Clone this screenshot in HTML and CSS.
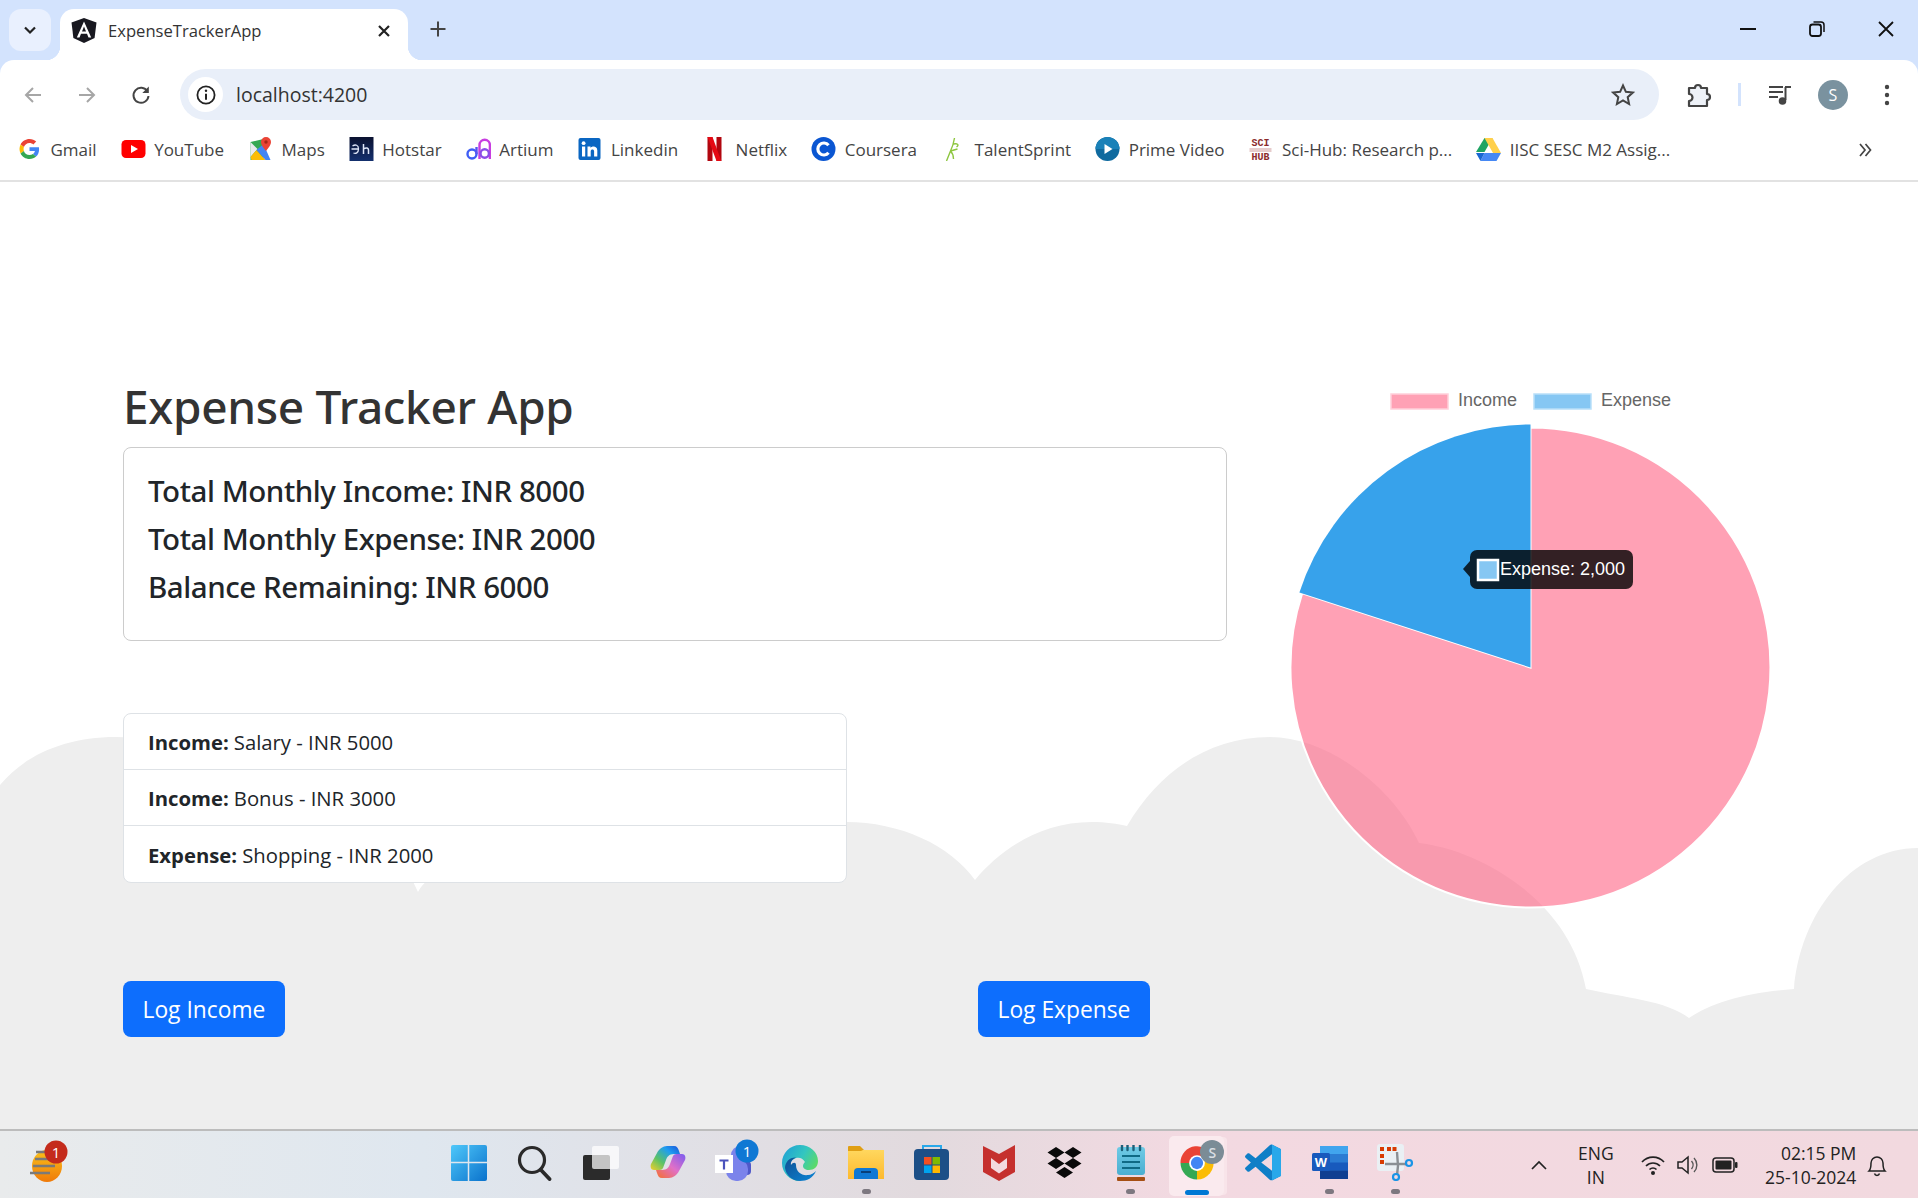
FILE: index.html
```html
<!DOCTYPE html>
<html lang="en">
<head>
  <meta charset="UTF-8">
  <title>ExpenseTrackerApp</title>
  <link rel="stylesheet" href="styles.css">
</head>
<body>
  <header class="browser">
    <div class="tabstrip">
      <div class="tab-search">
        <svg width="16" height="16" viewBox="0 0 16 16"><path d="M3 5.500l5 5 5-5" fill="none" stroke="#222" stroke-width="2.200"/></svg>
      </div>
      <div class="tab">
        <svg class="favicon" width="26" height="25" viewBox="0 0 26 25">
          <path d="M13 0L25.500 4.400 23.600 20 13 25 2.400 20 .5 4.400z" fill="#181820"/>
          <path d="M13 3.500L5.800 19.500h2.700l1.500-3.700h6l1.500 3.700h2.700zM11 13.500l2-4.900 2 4.900z" fill="#fff"/>
        </svg>
        <span class="tab-title">ExpenseTrackerApp</span>
        <svg class="tab-close" width="14" height="14" viewBox="0 0 14 14"><path d="M2 2l10 10M12 2L2 12" stroke="#222" stroke-width="2.200"/></svg>
      </div>
      <svg class="new-tab" width="18" height="18" viewBox="0 0 18 18"><path d="M9 1.500v15M1.500 9h15" stroke="#444" stroke-width="2"/></svg>
      <div class="win-controls">
        <svg width="16" height="4" viewBox="0 0 16 4"><path d="M0 2h16" stroke="#111" stroke-width="2"/></svg>
        <svg width="16" height="16" viewBox="0 0 16 16"><rect x="1" y="3.500" width="11" height="11.500" rx="2.500" fill="none" stroke="#111" stroke-width="1.800"/><path d="M4.500 1h7.500a3 3 0 0 1 3 3v7" fill="none" stroke="#111" stroke-width="1.500"/></svg>
        <svg width="16" height="16" viewBox="0 0 16 16"><path d="M1 1l14 14M15 1L1 15" stroke="#111" stroke-width="1.800"/></svg>
      </div>
    </div>

    <div class="toolbar">
      <div class="nav-buttons">
        <svg width="20" height="20" viewBox="0 0 20 20"><path d="M18 10H3M10 3l-7 7 7 7" fill="none" stroke="#a6a6a6" stroke-width="2"/></svg>
        <svg width="20" height="20" viewBox="0 0 20 20"><path d="M2 10h15M10 3l7 7-7 7" fill="none" stroke="#a6a6a6" stroke-width="2"/></svg>
        <svg width="20" height="20" viewBox="0 0 20 20"><path d="M16.500 6.500A7.500 7.500 0 1 0 17.500 11" fill="none" stroke="#444" stroke-width="2"/><path d="M17.800 1.500v6.500h-6.500z" fill="#444"/></svg>
      </div>
      <div class="omnibox">
        <div class="site-info">
          <svg width="20" height="20" viewBox="0 0 20 20"><circle cx="10" cy="10" r="8.600" fill="none" stroke="#222" stroke-width="1.800"/><path d="M10 8.800v6" stroke="#222" stroke-width="2"/><circle cx="10" cy="5.800" r="1.200" fill="#222"/></svg>
        </div>
        <span class="url">localhost:4200</span>
        <svg class="star" width="24" height="24" viewBox="0 0 24 24"><path d="M12 2.500l2.900 6.300 6.900.8-5.100 4.600 1.400 6.800-6.100-3.500-6.100 3.500 1.400-6.800L2.200 9.600l6.900-.8z" fill="none" stroke="#444" stroke-width="2"/></svg>
      </div>
      <div class="toolbar-icons">
        <svg class="puzzle" width="26" height="26" viewBox="0 0 26 26"><path d="M3 6h6a3 3 0 0 1 6 0h6v6a3 3 0 0 1 0 6v6H3v-5a3 3 0 0 0 0-7z" fill="#eef2f8" stroke="#444" stroke-width="2.200" stroke-linejoin="round"/></svg>
        <span class="tool-sep"></span>
        <svg class="media" width="24" height="22" viewBox="0 0 24 22"><path d="M1 3h14M1 8h14M1 13h9" stroke="#444" stroke-width="2"/><path d="M17 3h6" stroke="#444" stroke-width="2"/><path d="M17.500 3v13" stroke="#444" stroke-width="2"/><circle cx="14.500" cy="17" r="3.800" fill="#444"/></svg>
        <span class="avatar">S</span>
        <svg class="menu-dots" width="6" height="22" viewBox="0 0 6 22"><circle cx="3" cy="3" r="2.200" fill="#444"/><circle cx="3" cy="11" r="2.200" fill="#444"/><circle cx="3" cy="19" r="2.200" fill="#444"/></svg>
      </div>
    </div>

    <nav class="bookmarks">
      <a class="bm">
        <svg width="25" height="20" viewBox="0 0 48 48"><path fill="#EA4335" d="M24 9.500c3.540 0 6.710 1.220 9.210 3.600l6.850-6.850C35.900 2.380 30.470 0 24 0 14.620 0 6.510 5.380 2.560 13.220l7.980 6.190C12.430 13.720 17.740 9.500 24 9.500z"/><path fill="#4285F4" d="M46.980 24.550c0-1.570-.15-3.090-.38-4.550H24v9.020h12.940c-.58 2.960-2.260 5.480-4.780 7.180l7.730 6c4.510-4.180 7.090-10.360 7.090-17.650z"/><path fill="#FBBC05" d="M10.530 28.590c-.48-1.450-.76-2.990-.76-4.590s.27-3.140.76-4.590l-7.980-6.190C.92 16.460 0 20.120 0 24c0 3.880.92 7.540 2.560 10.780l7.970-6.190z"/><path fill="#34A853" d="M24 48c6.480 0 11.930-2.130 15.890-5.810l-7.730-6c-2.150 1.450-4.920 2.300-8.160 2.300-6.260 0-11.570-4.220-13.470-9.910l-7.980 6.190C6.510 42.620 14.620 48 24 48z"/></svg>
        Gmail
      </a>
      <a class="bm">
        <svg width="25" height="18" viewBox="0 0 24 18"><rect width="24" height="18" rx="4.500" fill="#f00"/><path d="M9.500 5l7 4-7 4z" fill="#fff"/></svg>
        YouTube
      </a>
      <a class="bm">
        <svg width="25" height="24" viewBox="0 0 22 24"><path d="M1 5l13-3v20l-13 1z" fill="#34a853"/><path d="M1 5l7 7-7 8z" fill="#e8eaed"/><path d="M1 20l6-7 9 10H2z" fill="#fbbc05"/><path d="M7 13l7-6 7 16h-5z" fill="#4285f4"/><path d="M16.500 0a5 5 0 0 1 5 5c0 3.500-5 9-5 9s-5-5.500-5-9a5 5 0 0 1 5-5z" fill="#ea4335"/><circle cx="16.500" cy="5" r="1.700" fill="#a52714"/></svg>
        Maps
      </a>
      <a class="bm">
        <svg width="25" height="24" viewBox="0 0 24 24"><defs><linearGradient id="hs" x1="0" y1="0" x2="0" y2="1"><stop offset="0" stop-color="#0b1230"/><stop offset="1" stop-color="#14306e"/></linearGradient></defs><rect width="24" height="24" fill="url(#hs)"/><path d="M3 9c3-2 6-1 6 3s-3 5-5 4M2 12h7" fill="none" stroke="#dfe6f8" stroke-width="1.300"/><path d="M14 7v10M14 12c3-2 5-1 5 1v4" fill="none" stroke="#dfe6f8" stroke-width="1.500"/></svg>
        Hotstar
      </a>
      <a class="bm">
        <svg width="25" height="24" viewBox="0 0 25 24"><circle cx="6" cy="17" r="4.500" fill="none" stroke="#3f5ef5" stroke-width="2.400"/><path d="M10.500 17V10" stroke="#5a55f0" stroke-width="2.400"/><path d="M13.500 22V8a5.200 5.200 0 0 1 10.400 0v14" fill="none" stroke="#c83de0" stroke-width="2.400"/><circle cx="18.700" cy="16.500" r="4.200" fill="none" stroke="#8d4de8" stroke-width="2.400"/></svg>
        Artium
      </a>
      <a class="bm">
        <svg width="25" height="22" viewBox="0 0 22 22"><rect width="22" height="22" rx="2" fill="#0a66c2"/><rect x="3.500" y="8.500" width="3.200" height="10" fill="#fff"/><circle cx="5.100" cy="5.200" r="1.900" fill="#fff"/><path d="M9 8.500h3v1.500c1-2 6.800-2.600 6.800 2.500v6h-3.200v-5.200c0-2.500-3.400-2.300-3.400 0v5.200H9z" fill="#fff"/></svg>
        Linkedin
      </a>
      <a class="bm">
        <svg width="25" height="24" viewBox="0 0 16 24"><path d="M1 0h5v24l-5 .5z" fill="#b1060f"/><path d="M10 0h5v24.500l-5-.5z" fill="#b1060f"/><path d="M1 0h5l9 24.500-5-.5z" fill="#e50914"/></svg>
        Netflix
      </a>
      <a class="bm">
        <svg width="25" height="24" viewBox="0 0 25 24"><circle cx="12.500" cy="12" r="12" fill="#0a56d2"/><path d="M17.500 8.200a6 6 0 1 0 0 7.600" fill="none" stroke="#fff" stroke-width="3.200"/></svg>
        Coursera
      </a>
      <a class="bm">
        <svg width="25" height="24" viewBox="0 0 16 24"><path d="M9 1c-1 6-2 9-4 13L1 24M5 14l7-2M8 7c4-1 6 1 3 3M5 14c2 2 3 5 3 8" fill="none" stroke="#8dc63f" stroke-width="1.400"/></svg>
        TalentSprint
      </a>
      <a class="bm">
        <svg width="25" height="24" viewBox="0 0 24 24"><circle cx="12" cy="12" r="12" fill="#0f6a9f"/><path d="M0 12a12 12 0 0 1 24 0z" fill="#1a81b8"/><path d="M9 7l8 5-8 5z" fill="#fff"/></svg>
        Prime Video
      </a>
      <a class="bm">
        <svg class="scihub" width="25" height="24" viewBox="0 0 24 24"><text class="scihub-mark" x="12" y="9" text-anchor="middle">SCI</text><path d="M1 12h22M1 14h22" stroke="#c99" stroke-width="1"/><text class="scihub-mark" x="12" y="23" text-anchor="middle">HUB</text></svg>
        Sci-Hub: Research p...
      </a>
      <a class="bm">
        <svg width="25" height="23" viewBox="0 0 25 23"><path d="M8.500 0h8l-8 14H0z" fill="#1fa463"/><path d="M8.500 0h8l8.500 15h-8z" fill="#ffd04b"/><path d="M4.500 23h16l4.500-8H8.500z" fill="#4688f4"/><path d="M0 15h8.500l-4 8z" fill="#1967d2"/></svg>
        IISC SESC M2 Assig...
      </a>
      <svg class="bm-more" width="14" height="14" viewBox="0 0 14 14"><path d="M2 1l5 6-5 6M7.500 1l5 6-5 6" fill="none" stroke="#444" stroke-width="1.700"/></svg>
    </nav>
  </header>

  <main class="page">
    <svg class="clouds" viewBox="0 182 1918 947" preserveAspectRatio="none">
      <path d="M0 785C25 755 65 737 116 737C230 737 375 790 418 892C445 840 650 822 846 822C900 822 950 845 975 880C1000 850 1040 822 1092 822C1105 822 1118 824 1127 826C1160 770 1210 737 1270 737C1330 737 1395 790 1419 843C1480 850 1570 900 1586 989C1625 998 1665 1000 1689 1018C1712 1002 1750 992 1794 989C1800 915 1850 848 1918 848V1129H0Z" fill="#eeeeee"/>
    </svg>

    <section class="left-col">
      <h1>Expense Tracker App</h1>
      <div class="summary">
        <p>Total Monthly Income: INR 8000</p>
        <p>Total Monthly Expense: INR 2000</p>
        <p>Balance Remaining: INR 6000</p>
      </div>
      <ul class="entries">
        <li><strong>Income:</strong> Salary - INR 5000</li>
        <li><strong>Income:</strong> Bonus - INR 3000</li>
        <li><strong>Expense:</strong> Shopping - INR 2000</li>
      </ul>
      <div class="actions">
        <button>Log Income</button>
        <button>Log Expense</button>
      </div>
    </section>

    <svg class="chart" width="540" height="560" viewBox="1264 370 540 560">
      <rect x="1391" y="394" width="57" height="15" fill="#ffa1b5" stroke="#ffd0da" stroke-width="1.500"/>
      <text class="legend" x="1458" y="406">Income</text>
      <rect x="1534" y="394" width="57" height="15" fill="#86c7f3" stroke="#b9dff9" stroke-width="1.500"/>
      <text class="legend" x="1601" y="406">Expense</text>

      <path d="M1530.500 667.500V427.500A240 240 0 1 1 1302.200 593.300Z" fill="rgba(255,99,132,0.6)" stroke="#fff" stroke-width="2"/>
      <path d="M1530.500 667.500L1299.400 592.400A243 243 0 0 1 1530.500 424.500Z" fill="#37a2eb"/>

      <rect x="1470" y="550" width="163" height="39" rx="7" fill="rgba(0,0,0,0.8)"/>
      <path d="M1470 561l-7 8 7 8z" fill="rgba(0,0,0,0.8)"/>
      <rect x="1478" y="560" width="20" height="20" fill="#86c7f3" stroke="#fff" stroke-width="2.500"/>
      <text class="tip" x="1500" y="575">Expense: 2,000</text>
    </svg>
  </main>

  <footer class="taskbar">
    <div class="task-left">
      <svg width="44" height="44" viewBox="0 0 44 44">
        <defs><linearGradient id="wx" x1="0" y1="0" x2="0" y2="1"><stop offset="0" stop-color="#fbc21a"/><stop offset="1" stop-color="#ef7a0a"/></linearGradient></defs>
        <ellipse cx="20" cy="26" rx="15" ry="16" fill="url(#wx)"/>
        <path d="M8 19h16M6 26h22M3 33h20M9 12h10" stroke="#7a7a7a" stroke-width="2.500"/>
        <circle cx="29" cy="12" r="11.500" fill="#c42b1c"/>
        <text class="badge-num" x="29" y="17.500" text-anchor="middle">1</text>
      </svg>
    </div>

    <div class="task-apps">
      <div class="app">
        <svg width="36" height="36" viewBox="0 0 36 36"><defs><linearGradient id="win" x1="0" y1="0" x2="1" y2="1"><stop offset="0" stop-color="#4fc8fa"/><stop offset="1" stop-color="#0a72cc"/></linearGradient></defs><rect width="36" height="36" rx="2" fill="url(#win)"/><path d="M17.500 0v36M0 17.500h36" stroke="#dfe6ee" stroke-width="1.500"/></svg>
      </div>
      <div class="app">
        <svg width="36" height="36" viewBox="0 0 36 36"><circle cx="15" cy="15" r="12.500" fill="none" stroke="#2a2a2a" stroke-width="3.200"/><path d="M24 25l8.500 9" stroke="#2a2a2a" stroke-width="3.800" stroke-linecap="round"/></svg>
      </div>
      <div class="app">
        <svg width="36" height="34" viewBox="0 0 36 34"><rect x="0" y="9" width="27" height="25" rx="2" fill="#2b2b2b"/><rect x="9" y="0" width="27" height="23" rx="2" fill="rgba(255,255,255,0.72)"/></svg>
      </div>
      <div class="app">
        <svg width="36" height="33" viewBox="0 0 36 33"><defs><linearGradient id="cop" x1="1" y1="0" x2="0" y2="1"><stop offset="0" stop-color="#1b4fd8"/><stop offset=".3" stop-color="#1f9df0"/><stop offset=".65" stop-color="#5bc267"/><stop offset="1" stop-color="#f3cf2a"/></linearGradient><linearGradient id="cop2" x1="1" y1="0" x2="0" y2="1"><stop offset="0" stop-color="#7a5cf0"/><stop offset=".5" stop-color="#e070c8"/><stop offset="1" stop-color="#f5702b"/></linearGradient></defs><path d="M19 32H12C9 32 8 30 7 27L6 24H12C17 24 19 21 20 18L23 10C24 8 26 8 28 8H32C35 8 36 11 35 14L29 25C27 29 23 32 19 32Z" fill="url(#cop2)"/><path d="M17 0H24C27 0 28 2 29 5L30 8H24C19 8 17 11 16 14L13 22C12 24 10 24 8 24H4C1 24 0 21 1 18L7 7C9 3 13 0 17 0Z" fill="url(#cop)"/></svg>
      </div>
      <div class="app">
        <svg class="teams" width="44" height="42" viewBox="0 0 44 42"><circle cx="25" cy="16" r="9" fill="#7b83eb"/><rect x="24" y="22" width="12" height="14" rx="4" fill="#5059c9"/><rect x="11" y="20" width="22" height="22" rx="10" fill="#7b83eb"/><rect x="0" y="16" width="18" height="18" fill="#fff"/><path d="M4.500 21.500h9M9 21.500v9" stroke="#4b53bc" stroke-width="2.200"/><circle cx="32" cy="12" r="11.500" fill="#0f78d4"/><text class="badge-num" x="32" y="17.500" text-anchor="middle">1</text></svg>
      </div>
      <div class="app">
        <svg width="36" height="36" viewBox="0 0 36 36"><defs><linearGradient id="edge" x1="0" y1="0" x2="1" y2=".6"><stop offset="0" stop-color="#1c9cd8"/><stop offset=".55" stop-color="#33c6c0"/><stop offset="1" stop-color="#62dc5c"/></linearGradient><linearGradient id="edge2" x1="0" y1="0" x2="1" y2="1"><stop offset="0" stop-color="#0f4f93"/><stop offset="1" stop-color="#0c86d6"/></linearGradient></defs><path d="M18 0C28 0 36 7 36 16C36 22 32 25 27 25C23 25 21 23 21 21C21 19 22 18 23 17C21 13 17 12 14 13C8 15 6 21 8 26C10 31 14 34 18 36C8 36 0 28 0 18C0 8 8 0 18 0Z" fill="url(#edge)"/><path d="M14 20C14 27 20 31 26 30C29 30 32 28 34 26C31 33 25 36 18 36C10 36 4 30 3 23C3 17 8 12 14 12.500C10 14 8.500 17 9 20C11 17 14 17 14 20Z" fill="url(#edge2)"/></svg>
      </div>
      <div class="app has-dot">
        <svg width="36" height="33" viewBox="0 0 36 33"><defs><linearGradient id="fold" x1="0" y1="0" x2="0" y2="1"><stop offset="0" stop-color="#ffd75e"/><stop offset="1" stop-color="#fdb92e"/></linearGradient></defs><path d="M0 1a1 1 0 0 1 1-1h11l4 4h20v4H0z" fill="#e09f14"/><path d="M0 5h13l2-1h21v29H0z" fill="url(#fold)"/><path d="M6 33v-7a4 4 0 0 1 4-4h16a4 4 0 0 1 4 4v7z" fill="#0f78d4"/><path d="M13 26h10" stroke="#083f7a" stroke-width="2"/></svg>
      </div>
      <div class="app">
        <svg width="36" height="35" viewBox="0 0 36 35"><path d="M9 6V1h18v5" fill="none" stroke="#28a8ea" stroke-width="2"/><rect y="4" width="35" height="31" rx="4" fill="#1c4f87"/><rect x="10" y="12" width="7.500" height="7.500" fill="#f25022"/><rect x="18.500" y="12" width="7.500" height="7.500" fill="#7fba00"/><rect x="10" y="20.500" width="7.500" height="7.500" fill="#00a4ef"/><rect x="18.500" y="20.500" width="7.500" height="7.500" fill="#ffb900"/></svg>
      </div>
      <div class="app">
        <svg width="32" height="36" viewBox="0 0 32 36"><path d="M0 1l16 8 16-9v27l-16 9-16-9z" fill="#c5302e"/><path d="M8 13l8 6 8-6v10l-8 5.500L8 23z" fill="#f3d9df"/></svg>
      </div>
      <div class="app">
        <svg width="35" height="31" viewBox="0 0 35 31"><path d="M9 0l8.500 5.500L9 11 .5 5.500zM26 0l8.500 5.500L26 11l-8.500-5.500zM9 11l8.500 5.500L9 22 .5 16.500zM26 11l8.500 5.500L26 22l-8.500-5.500zM17.500 20l8.500 5.500L17.500 31 9 25.500z" fill="#0a0a0a"/></svg>
      </div>
      <div class="app has-dot">
        <svg width="28" height="36" viewBox="0 0 28 36"><defs><linearGradient id="note" x1="0" y1="0" x2="0" y2="1"><stop offset="0" stop-color="#6fcbe6"/><stop offset="1" stop-color="#4aaed0"/></linearGradient></defs><rect y="2" width="28" height="28" rx="3" fill="url(#note)"/><rect y="32" width="28" height="4" rx="1" fill="#a64f14"/><path d="M5 11h18M5 17h18M5 23h18" stroke="#0f6a85" stroke-width="2"/><path d="M5 0v5M10.500 0v5M16.500 0v5M23 0v5" stroke="#1d5f78" stroke-width="2.400" stroke-linecap="round"/></svg>
      </div>
      <div class="app is-active has-bar">
        <svg width="36" height="36" viewBox="0 0 48 48"><path d="M24 24L2 24A22 22 0 0 1 45.500 19Z" fill="#ea4335"/><path d="M24 24L45.500 19A22 22 0 0 1 24 46Z" fill="#fbbc05"/><path d="M24 24L24 46A22 22 0 0 1 2 24Z" fill="#34a853"/><circle cx="24" cy="24" r="10.500" fill="#fff"/><circle cx="24" cy="24" r="8.200" fill="#4285f4"/></svg>
        <span class="profile-badge">S</span>
      </div>
      <div class="app">
        <svg width="36" height="37" viewBox="0 0 100 100"><path fill-rule="evenodd" fill="#0f7fc7" d="M96.500 10.800L75.900.9c-2.400-1.100-5.200-.6-7.100 1.200L29.400 38.100 12.200 25.100c-1.600-1.200-3.800-1.100-5.300.2L1.400 30.400c-1.800 1.600-1.800 4.400 0 6.100L16.300 50 1.400 63.600c-1.800 1.700-1.800 4.500 0 6.100l5.500 5c1.500 1.300 3.700 1.400 5.300.2l17.200-13 39.400 35.900c1.900 1.900 4.700 2.300 7.100 1.200l20.600-9.900c2.200-1 3.500-3.100 3.500-5.500V16.300c0-2.400-1.400-4.500-3.500-5.500ZM75 72.700L45.100 50 75 27.300Z"/><path fill="#28a8ea" d="M75 .6l.9.3 20.600 9.900c2.100 1 3.500 3.100 3.500 5.500v67.400c0 2.400-1.300 4.500-3.500 5.500l-20.600 9.900-.9.300Z"/></svg>
      </div>
      <div class="app has-dot">
        <svg width="36" height="33" viewBox="0 0 36 33"><rect x="8" y="0" width="28" height="33" rx="2" fill="#2b7cd3"/><rect x="8" y="0" width="28" height="8" fill="#41a5ee"/><rect x="8" y="16.500" width="28" height="8" fill="#185abd"/><rect x="8" y="24.500" width="28" height="8.500" fill="#103f91"/><rect y="7" width="18" height="18" rx="1.500" fill="#185abd"/><text class="word-mark" x="9" y="21" text-anchor="middle">W</text></svg>
      </div>
      <div class="app has-dot">
        <svg width="37" height="37" viewBox="0 0 37 37"><rect width="27" height="27" rx="3" fill="#eaf0f4"/><path d="M3 3h4v4H3zM10 3h4v4h-4zM15.500 3h4v4h-4zM3 10h4v4H3zM3 16h4v4H3z" fill="#d83b01"/><path d="M20 8l1 14-1 9M8 20h21" fill="none" stroke="#8a8f94" stroke-width="2.400"/><circle cx="32" cy="19" r="3" fill="none" stroke="#1a94e6" stroke-width="2.200"/><circle cx="19" cy="33" r="3" fill="none" stroke="#1a94e6" stroke-width="2.200"/></svg>
      </div>
    </div>

    <div class="tray">
      <svg class="tray-chevron" width="16" height="10" viewBox="0 0 16 10"><path d="M1 9l7-7 7 7" fill="none" stroke="#222" stroke-width="1.700"/></svg>
      <div class="lang">ENG<br>IN</div>
      <svg class="tray-icon wifi" width="24" height="22" viewBox="0 0 24 22"><path d="M1 8c6-6.500 16-6.500 22 0M5 12c4-4 10-4 14 0M8.500 15.500c2-2 5-2 7 0" fill="none" stroke="#222" stroke-width="1.700"/><circle cx="12" cy="19" r="2" fill="#222"/></svg>
      <svg class="tray-icon" width="24" height="22" viewBox="0 0 24 22"><path d="M1 8h4l6-5v16l-6-5H1z" fill="none" stroke="#222" stroke-width="1.500"/><path d="M14.500 7a6 6 0 0 1 0 8M17 4a10 10 0 0 1 0 14" fill="none" stroke="#555" stroke-width="1.400"/></svg>
      <svg class="tray-icon battery" width="26" height="16" viewBox="0 0 26 16"><rect x="1" y="1" width="21" height="14" rx="3" fill="none" stroke="#222" stroke-width="1.500"/><rect x="3.500" y="3.500" width="16" height="9" rx="1" fill="#222"/><rect x="23" y="5" width="2.500" height="6" rx="1" fill="#222"/></svg>
      <div class="clock">02:15 PM<br>25-10-2024</div>
      <svg class="bell" width="22" height="24" viewBox="0 0 22 24"><path d="M3 18c2-2 2-4 2-8a6 6 0 0 1 12 0c0 4 0 6 2 8zM8.500 20.500a2.600 2.600 0 0 0 5 0" fill="none" stroke="#222" stroke-width="1.500"/></svg>
    </div>
  </footer>
</body>
</html>
```

FILE: styles.css
```css
* {
  box-sizing: border-box;
}
html, body {
  margin: 0;
  padding: 0;
}
body {
  width: 1918px;
  height: 1198px;
  overflow: hidden;
  background: #fff;
  font-family: "Open Sans", sans-serif;
  display: flex;
  flex-direction: column;
}

/* browser frame */
.browser {
  height: 182px;
  flex: none;
  background: #d3e3fd;
}
.tabstrip {
  height: 60px;
  display: flex;
  align-items: flex-start;
  padding: 9px 0 0 9px;
}
.tab-search {
  width: 42px;
  height: 42px;
  border-radius: 12px;
  background: #e9f0fe;
  display: flex;
  align-items: center;
  justify-content: center;
}
.tab {
  position: relative;
  width: 348px;
  height: 51px;
  margin-left: 9px;
  padding: 0 17px 8px 11px;
  background: #fff;
  border-radius: 14px 14px 0 0;
  display: flex;
  align-items: center;
}
.tab::before,
.tab::after {
  content: "";
  position: absolute;
  bottom: 0;
  width: 14px;
  height: 14px;
}
.tab::before {
  left: -14px;
  background: radial-gradient(circle at 0 0, transparent 14px, #fff 14.5px);
}
.tab::after {
  right: -14px;
  background: radial-gradient(circle at 100% 0, transparent 14px, #fff 14.5px);
}
.tab-title {
  margin-left: 11px;
  font-size: 16.6px;
  color: #333;
}
.tab-close {
  margin-left: auto;
}
.new-tab {
  margin: 11px 0 0 21px;
}
.win-controls {
  margin: 12px 0 0 auto;
  padding-right: 24px;
  display: flex;
  align-items: center;
  gap: 53px;
  height: 16px;
}

.toolbar {
  height: 60px;
  padding-top: 9px;
  background: #fff;
  border-radius: 14px 14px 0 0;
  display: flex;
  align-items: center;
}
.nav-buttons {
  width: 180px;
  padding-left: 23px;
  display: flex;
  gap: 34px;
}
.omnibox {
  width: 1479px;
  height: 51px;
  border-radius: 26px;
  background: #e9eff9;
  display: flex;
  align-items: center;
  padding: 0 24px 0 8px;
}
.site-info {
  width: 35px;
  height: 35px;
  border-radius: 50%;
  background: #fff;
  display: flex;
  align-items: center;
  justify-content: center;
}
.url {
  margin-left: 13px;
  font-size: 19.5px;
  color: #333;
}
.star {
  margin-left: auto;
}
.toolbar-icons {
  flex: 1;
  display: flex;
  align-items: center;
}
.puzzle {
  margin-left: 27px;
}
.tool-sep {
  width: 3px;
  height: 23px;
  margin-left: 26px;
  background: #d3e3fd;
}
.media {
  margin-left: 27px;
}
.avatar {
  width: 30px;
  height: 30px;
  margin-left: 26px;
  border-radius: 50%;
  background: #7a929f;
  color: #fff;
  font-size: 16px;
  display: flex;
  align-items: center;
  justify-content: center;
}
.menu-dots {
  margin-left: 36px;
}

.bookmarks {
  height: 62px;
  padding: 0 0 2px 17px;
  background: #fff;
  border-bottom: 2px solid #e2e2e2;
  display: flex;
  align-items: center;
}
.bm {
  display: flex;
  align-items: center;
  gap: 8.5px;
  margin-right: 24px;
  font-size: 17px;
  color: #444;
  white-space: nowrap;
}
.bm-more {
  position: absolute;
  left: 1858px;
  top: 143px;
}
.scihub {
  overflow: visible;
}
.scihub-mark {
  font-family: "Liberation Mono", monospace;
  font-size: 10px;
  font-weight: bold;
  fill: #8b2c2c;
}

/* page */
.page {
  position: relative;
  flex: 1;
  display: flex;
  align-items: flex-start;
  padding-left: 123px;
}
.clouds {
  position: absolute;
  left: 0;
  top: 0;
  width: 100%;
  height: 100%;
}
.left-col {
  position: relative;
  width: 1104px;
  flex: none;
  padding-top: 197px;
}
h1 {
  margin: 0 0 13px;
  font-family: "Noto Sans", sans-serif;
  font-size: 46px;
  line-height: 55px;
  font-weight: 500;
  letter-spacing: -0.33px;
  color: #333;
}
.summary {
  height: 194px;
  padding: 19px 24px;
  background: #fff;
  border: 1px solid #ccc;
  border-radius: 8px;
}
.summary p {
  margin: 0;
  font-family: "Noto Sans", sans-serif;
  font-size: 29.5px;
  line-height: 48px;
  font-weight: 500;
  letter-spacing: -0.45px;
  color: #212529;
}
.entries {
  width: 724px;
  height: 170px;
  margin: 72px 0 0;
  padding: 0;
  list-style: none;
  background: #fff;
  border: 1px solid #dee2e6;
  border-radius: 8px;
}
.entries li {
  height: 56px;
  padding: 1px 24px 0;
  display: flex;
  align-items: center;
  gap: 0.25em;
  border-bottom: 1px solid #dee2e6;
  font-size: 20.3px;
  color: #212529;
}
.entries li:last-child {
  border-bottom: 0;
}
.actions {
  display: grid;
  grid-template-columns: 855px auto;
  justify-content: start;
  justify-items: start;
  margin-top: 98px;
}
button {
  height: 56px;
  padding: 0 19.5px;
  border: 0;
  border-radius: 8px;
  background: #0d6efd;
  color: #fff;
  font-family: inherit;
  font-size: 22.8px;
}
.chart {
  position: relative;
  flex: none;
  margin: 188px 0 0 37px;
  overflow: visible;
}
.legend {
  font-family: "Liberation Sans", Arial, sans-serif;
  font-size: 18px;
  fill: #666;
}
.tip {
  font-family: "Liberation Sans", Arial, sans-serif;
  font-size: 18px;
  fill: #fff;
}

/* windows taskbar */
.taskbar {
  height: 69px;
  flex: none;
  border-top: 2px solid #bcbcbc;
  background: linear-gradient(90deg, #e9ebec 0, #dfe7ef 22%, #e2dade 48%, #f3d9e1 62%, #f2d9df 100%);
  display: flex;
  align-items: center;
}
.task-left {
  width: 436px;
  padding: 0 0 6px 27px;
  display: flex;
}
.task-apps {
  display: flex;
  align-items: center;
}
.app {
  position: relative;
  width: 66.2px;
  height: 67px;
  display: flex;
  align-items: center;
  justify-content: center;
  padding-bottom: 4px;
}
.teams {
  margin: -6px -6px 0 0;
}
.has-dot::after {
  content: "";
  position: absolute;
  bottom: 4px;
  left: 50%;
  width: 9px;
  height: 5px;
  margin-left: -4.5px;
  border-radius: 3px;
  background: #7d7880;
}
.has-bar::after {
  content: "";
  position: absolute;
  bottom: 3px;
  left: 50%;
  width: 24px;
  height: 5px;
  margin-left: -12px;
  border-radius: 3px;
  background: #0078d4;
}
.is-active::before {
  content: "";
  position: absolute;
  left: 5px;
  right: 6px;
  top: 5px;
  bottom: 2px;
  border-radius: 5px;
  background: #faeaee;
  box-shadow: 4px 0 0 -1px #f8e4e9;
}
.is-active svg {
  position: relative;
}
.profile-badge {
  position: absolute;
  top: 9px;
  right: 6px;
  width: 24px;
  height: 24px;
  border-radius: 50%;
  background: #7b8c96;
  color: #d8dfe3;
  font-size: 14px;
  font-weight: 600;
  display: flex;
  align-items: center;
  justify-content: center;
}
.badge-num {
  font-family: "Open Sans", sans-serif;
  font-size: 15px;
  fill: #fff;
}
.word-mark {
  font-family: "Liberation Sans", Arial, sans-serif;
  font-size: 13px;
  font-weight: bold;
  fill: #fff;
}
.tray {
  flex: 1;
  display: flex;
  align-items: center;
  height: 100%;
  font-size: 17.5px;
  color: #222;
}
.tray-chevron {
  margin-left: 102px;
}
.lang {
  width: 60px;
  margin-left: 19px;
  text-align: center;
  line-height: 24px;
}
.tray-icon {
  margin-left: 12px;
}
.wifi {
  margin-left: 15.5px;
}
.battery {
  margin-left: 11px;
}
.clock {
  width: 110px;
  margin-left: 8px;
  text-align: right;
  line-height: 24px;
}
.bell {
  margin-left: 10px;
}
```
